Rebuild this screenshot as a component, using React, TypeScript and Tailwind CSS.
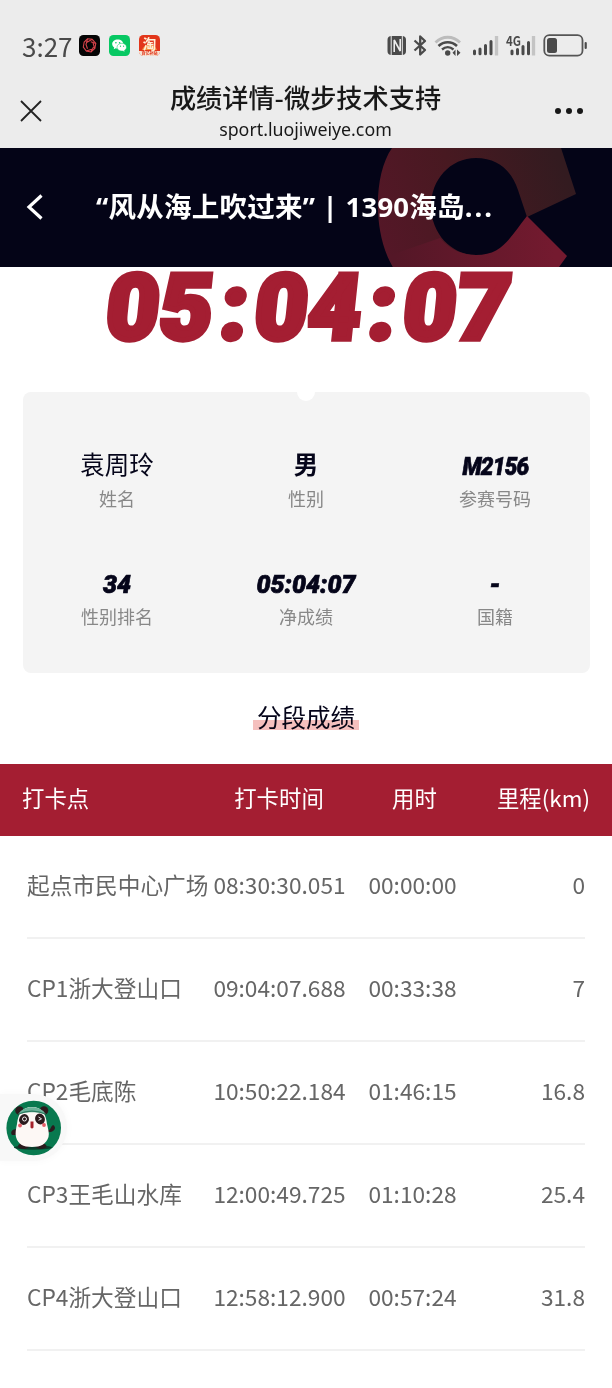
import React from "react";

interface Stat {
  label: string;
  value: string;
  style: string;
}

interface Split {
  point: string;
  clock: string;
  duration: string;
  distance: string;
}

const number_style =
  "pt-[3px] font-['Roboto','Noto_Sans_CJK_SC',sans-serif] text-[25px] font-black italic [-webkit-text-stroke:0.7px_#05051a]";

const stats: Stat[] = [
  { label: "姓名", value: "袁周玲", style: "text-[24.5px]" },
  { label: "性别", value: "男", style: "text-[24.5px] font-bold" },
  { label: "参赛号码", value: "M2156", style: `${number_style} scale-x-90 tracking-[-0.8px]` },
  { label: "性别排名", value: "34", style: number_style },
  { label: "净成绩", value: "05:04:07", style: number_style },
  { label: "国籍", value: "-", style: number_style },
];

const splits: Split[] = [
  { point: "起点市民中心广场", clock: "08:30:30.051", duration: "00:00:00", distance: "0" },
  { point: "CP1浙大登山口", clock: "09:04:07.688", duration: "00:33:38", distance: "7" },
  { point: "CP2毛底陈", clock: "10:50:22.184", duration: "01:46:15", distance: "16.8" },
  { point: "CP3王毛山水库", clock: "12:00:49.725", duration: "01:10:28", distance: "25.4" },
  { point: "CP4浙大登山口", clock: "12:58:12.900", duration: "00:57:24", distance: "31.8" },
];

const AppBadges: React.FC = () => (
  <div className="ml-[7px] flex gap-[9px]">
    <svg width="21" height="21" viewBox="0 0 21 21">
      <rect width="21" height="21" rx="4.5" fill="#050505" />
      <g fill="none" stroke="#d8434b" strokeWidth="1.1">
        <path d="M8.500 3.800 13.200 4.300 16.800 8.500 15.800 13.500 12 17 7.300 16 4.300 12 5.200 7z" />
        <path d="M8.500 3.800 7 9.500l1.500 4.300M13.200 4.300 8 7.200M16.800 8.500l-5-1.800M15.800 13.500 14 8M12 17l2.500-5M7.300 16l5.500-1.800" />
      </g>
    </svg>
    <svg width="21" height="21" viewBox="0 0 21 21">
      <rect width="21" height="21" rx="4.5" fill="#07c863" />
      <path d="M8.800 4.600c-3.200 0-5.600 2-5.600 4.500 0 1.400.8 2.600 2 3.500l-.5 1.700 2-1c2.900.8 7.600-.8 7.600-4.200 0-2.500-2.400-4.500-5.500-4.500z" fill="#fff" />
      <path d="M13 8.300c-2.900 0-5 1.700-5 3.900 0 2.300 2.500 4.200 6 3.800l1.800.9-.4-1.500c1.300-.8 2.100-1.900 2.100-3.200 0-2.200-2-3.900-4.500-3.900z" fill="#fff" stroke="#07c863" strokeWidth=".5" />
      <g fill="#07c863">
        <circle cx="6.900" cy="7.800" r=".8" />
        <circle cx="10.600" cy="7.800" r=".8" />
        <circle cx="11.500" cy="11.200" r=".6" />
        <circle cx="14.600" cy="11.200" r=".6" />
      </g>
    </svg>
    <svg className="overflow-visible" width="21" height="21" viewBox="0 0 21 21">
      <rect width="21" height="21" rx="4.5" fill="#e2361a" />
      <path d="M0 16h21v.5a4.500 4.500 0 0 1-4.500 4.500h-12A4.500 4.500 0 0 1 0 16.500z" fill="#f6e3d3" />
      <path d="M3 15a8 8 0 0 1 15 0z" fill="#f3913c" />
      <text x="10.500" y="13.500" textAnchor="middle" fontSize="13.500" fontWeight="700" fill="#fff0d8">淘</text>
      <text x="10.500" y="19.900" textAnchor="middle" fontSize="4" fontWeight="700" fill="#e2361a">百亿补贴</text>
    </svg>
  </div>
);

const StatusIcons: React.FC = () => (
  <svg width="202" height="26" viewBox="386 33 202 26" className="shrink-0 overflow-visible">
    <rect x="387.500" y="36" width="18.500" height="19" rx="4" fill="#4a4a4a" />
    <path d="M391.200 36v19M402.300 36v19" stroke="#ececec" strokeWidth="1" />
    <path d="M394.200 52V40l6 11V39" fill="none" stroke="#ececec" strokeWidth="1.600" />
    <path d="M414.500 40.500 425 50l-4.800 4.500v-18L425 41l-10.500 9.500" fill="none" stroke="#4a4a4a" strokeWidth="2.300" strokeLinejoin="round" />
    <g fill="none">
      <path d="M435.500 42.500c7-7 17.500-7 24.500 0" stroke="#bcbcbc" strokeWidth="2.800" />
      <path d="M438.500 46c5.500-5 13-5 18.500 0" stroke="#4a4a4a" strokeWidth="2.600" />
      <path d="M442 49.500c3.500-3 8-3 11.500 0" stroke="#4a4a4a" strokeWidth="2.400" />
    </g>
    <circle cx="447.700" cy="53" r="2.700" fill="#4a4a4a" />
    <path d="m455.500 49.500-3 3.200 3 3.200zM457 49.500l3.500 3.200-3.500 3.200z" fill="#4a4a4a" />
    <g strokeWidth="3" stroke="#4a4a4a" strokeLinecap="round">
      <path d="M474.500 51v2.800M480 49v4.800M485.500 45.500v8.300M491 41.500v12.300" />
      <path d="M512 51v2.800M517.500 49.500v4.300M523 46.500v7.300M528.500 42.500v11.300" />
    </g>
    <path d="M496.500 36v19.500M533.500 36v19.500" stroke="#c4c4c4" strokeWidth="3.300" />
    <text x="506" y="45.500" fill="#4a4a4a" fontSize="13.500" fontWeight="700" textLength="15" lengthAdjust="spacingAndGlyphs">4G</text>
    <rect x="544.300" y="35.200" width="38.200" height="20.500" rx="5" fill="none" stroke="#555" strokeWidth="1.800" />
    <rect x="547" y="38" width="10" height="15" rx="2.500" fill="#4a4a4a" />
    <path d="M585.700 43v5" stroke="#4a4a4a" strokeWidth="2.200" strokeLinecap="round" />
  </svg>
);

// Decorative open ring behind the banner title
const BannerRing: React.FC = () => (
  <svg className="absolute top-0 left-[370px]" width="220" height="119" viewBox="370 148 220 119">
    <defs>
      <linearGradient id="ring_upper" x1="380" y1="230" x2="560" y2="160" gradientUnits="userSpaceOnUse">
        <stop offset="0" stopColor="#541727" />
        <stop offset="0.45" stopColor="#481921" />
        <stop offset="1" stopColor="#331b20" />
      </linearGradient>
      <linearGradient id="ring_lower" x1="395" y1="240" x2="555" y2="240" gradientUnits="userSpaceOnUse">
        <stop offset="0" stopColor="#541727" />
        <stop offset="1" stopColor="#741a2f" />
      </linearGradient>
    </defs>
    <path
      d="M392 148C373 175 373 235 393 267H476V255C451 255 431 233 431 206C431 180 450 158 476 158C499 158 512 172 518 190L527 217L576 194L561 148Z"
      fill="url(#ring_upper)"
    />
    <path d="M393 267L388 256L440 238C450 250 462 255 476 255C503 255 510 237 527 216L567 256L559 267Z" fill="url(#ring_lower)" />
  </svg>
);

const PandaAvatar: React.FC = () => (
  <svg width="56" height="56" viewBox="0 0 56 56">
    <circle cx="27.700" cy="28" r="27.300" fill="#08794f" />
    <ellipse cx="27" cy="47.500" rx="19" ry="2.200" fill="#0b3d2b" />
    <g fill="#2b1b1d">
      <circle cx="13.500" cy="10.500" r="4.300" />
      <circle cx="38" cy="10.500" r="4.300" />
      <path d="M11 29c-5 0-7 3-5 6l6 0zM41 30c4 1 3-3 6-5 4 2 2 8-6 7z" />
      <ellipse cx="17.500" cy="46" rx="5.500" ry="3" />
      <ellipse cx="35" cy="46" rx="5.500" ry="3" />
    </g>
    <path d="M26 7C16 7 12 14 11 24C10 29 9 33 10 37C12 44 17 47 26 47S40 44 42.500 37C43.500 33 42 29 41 24C40 14 36 7 26 7Z" fill="#fdf8f5" />
    <path d="M12.500 14C17 5 35 5 39.500 14C31 11.500 21 11.500 12.500 14Z" fill="#6cb39a" />
    <path d="M12.500 14C21 10.500 31 10.500 39.500 14" fill="none" stroke="#2d7c61" strokeWidth="1.200" />
    <ellipse cx="18" cy="19.500" rx="4.800" ry="5.500" transform="rotate(25 18 19.500)" fill="#2b1b1d" />
    <ellipse cx="34" cy="19" rx="4.800" ry="5.500" transform="rotate(-25 34 19)" fill="#2b1b1d" />
    <circle cx="18.500" cy="19" r="2" fill="none" stroke="#fff" strokeWidth=".9" />
    <path d="m32.500 17 3 1.800-3 1.500" fill="none" stroke="#fff" strokeWidth=".9" />
    <circle cx="14" cy="25.500" r="1.900" fill="#e55b66" />
    <circle cx="38" cy="25" r="1.900" fill="#e55b66" />
    <path d="M24.500 21.500h3v6q-1.500 2-3 0z" fill="#a5232c" />
  </svg>
);

const App: React.FC = () => {
  return (
    <div className="relative h-[1388px] w-[612px] overflow-hidden bg-white font-['Noto_Sans_CJK_SC',sans-serif] text-[#05051a]">
      <header className="h-[148px] bg-[#ececec]">
        <div className="flex h-[62px] items-center pt-[29px] pl-[22px]">
          <span className="w-[50px] text-[26px] leading-none text-[#4a4a4a]">3:27</span>
          <AppBadges />
          <div className="ml-auto pr-[24px]">
            <StatusIcons />
          </div>
        </div>
        <div className="flex h-[86px] justify-between pt-[17px]">
          <svg className="mt-[21px] ml-[20px]" width="22" height="22" viewBox="0 0 22 22">
            <path d="M1 1l20 20M21 1L1 21" stroke="#222" strokeWidth="1.800" />
          </svg>
          <div className="ml-[14px] text-center text-[#181818]">
            <h1 className="h-[38px] text-[26.200px] leading-[37px] font-medium whitespace-nowrap">成绩详情-微步技术支持</h1>
            <p className="font-['Noto_Sans',sans-serif] text-[17.800px] leading-[24px]">sport.luojiweiye.com</p>
          </div>
          <div className="mt-[29px] mr-[29px] flex gap-[5px]">
            <i className="h-[6px] w-[6px] rounded-full bg-[#181818]" />
            <i className="h-[6px] w-[6px] rounded-full bg-[#181818]" />
            <i className="h-[6px] w-[6px] rounded-full bg-[#181818]" />
          </div>
        </div>
      </header>

      <div className="relative flex h-[119px] items-center bg-[#040417] text-white">
        <BannerRing />
        <svg className="relative -mt-[2px] ml-[26px]" width="18" height="26" viewBox="0 0 18 26">
          <path d="M15.500 1.500L3 13L15.500 24.500" fill="none" stroke="#fff" strokeWidth="3.200" />
        </svg>
        <h2 className="relative -mt-[2px] ml-[52px] font-['Noto_Sans','Noto_Sans_CJK_SC',sans-serif] text-[27.500px] font-bold tracking-[0.250px] whitespace-nowrap">
          “风从海上吹过来” | 1390海岛<span className="tracking-[2px]">...</span>
        </h2>
      </div>

      <div className="flex h-[125px] -skew-x-[6deg] justify-center pl-[1px] font-['Roboto',sans-serif] text-[91px] leading-[82px] font-black text-[#a41e32] [-webkit-text-stroke:5.500px_#a41e32]">
        <span className="tracking-[0.800px]">05</span>
        <span className="mx-[7px]">:</span>
        <span className="tracking-[0.800px]">04</span>
        <span className="mx-[7px]">:</span>
        <span className="tracking-[0.800px]">07</span>
      </div>

      <section className="relative mx-[22.500px] grid h-[281px] grid-cols-3 grid-rows-[118px_118px] overflow-hidden rounded-[8px] bg-[#f4f4f4] pt-[53px] text-center">
        <div className="absolute -top-[9px] left-1/2 h-[18px] w-[18px] -translate-x-1/2 rounded-full bg-white" />
        {stats.map((stat) => (
          <div key={stat.label}>
            <div className={`h-[37px] leading-[37px] ${stat.style}`}>{stat.value}</div>
            <div className="text-[18px] leading-[32px] text-[#888]">{stat.label}</div>
          </div>
        ))}
      </section>

      <div className="flex h-[91px] justify-center pt-[28px]">
        <h3 className="relative h-[36px] px-[4px] text-[24.500px] leading-[32px]">
          分段成绩
          <span className="absolute top-[19px] left-0 h-[10px] w-full bg-[#f5c0be] mix-blend-multiply" />
        </h3>
      </div>

      <div className="grid h-[72px] grid-cols-[190px_134px_137px_1fr] items-center bg-[#a41e32] px-[22px] pb-[5px] text-[22.400px] text-white">
        <span>打卡点</span>
        <span className="text-center">打卡时间</span>
        <span className="text-center">用时</span>
        <span className="text-right">里程(km)</span>
      </div>

      <div className="mx-[27px] text-[22.700px] text-[#666]">
        {splits.map((split) => (
          <div
            key={split.point}
            className="grid h-[103px] grid-cols-[185px_135px_131px_1fr] items-center border-b-2 border-[#f1f1f1] pb-[3px] whitespace-nowrap"
          >
            <span>{split.point}</span>
            <span className="text-center">{split.clock}</span>
            <span className="text-center">{split.duration}</span>
            <span className="text-right">{split.distance}</span>
          </div>
        ))}
      </div>

      {/* Floating assistant button docked to the left edge */}
      <div className="absolute top-[1094px] left-0 flex h-[67px] w-[67px] items-center rounded-r-full bg-[#f8f8f8] pl-[6px] shadow-[0_0_8px_rgba(0,0,0,0.03)]">
        <PandaAvatar />
      </div>
    </div>
  );
};

export default App;
